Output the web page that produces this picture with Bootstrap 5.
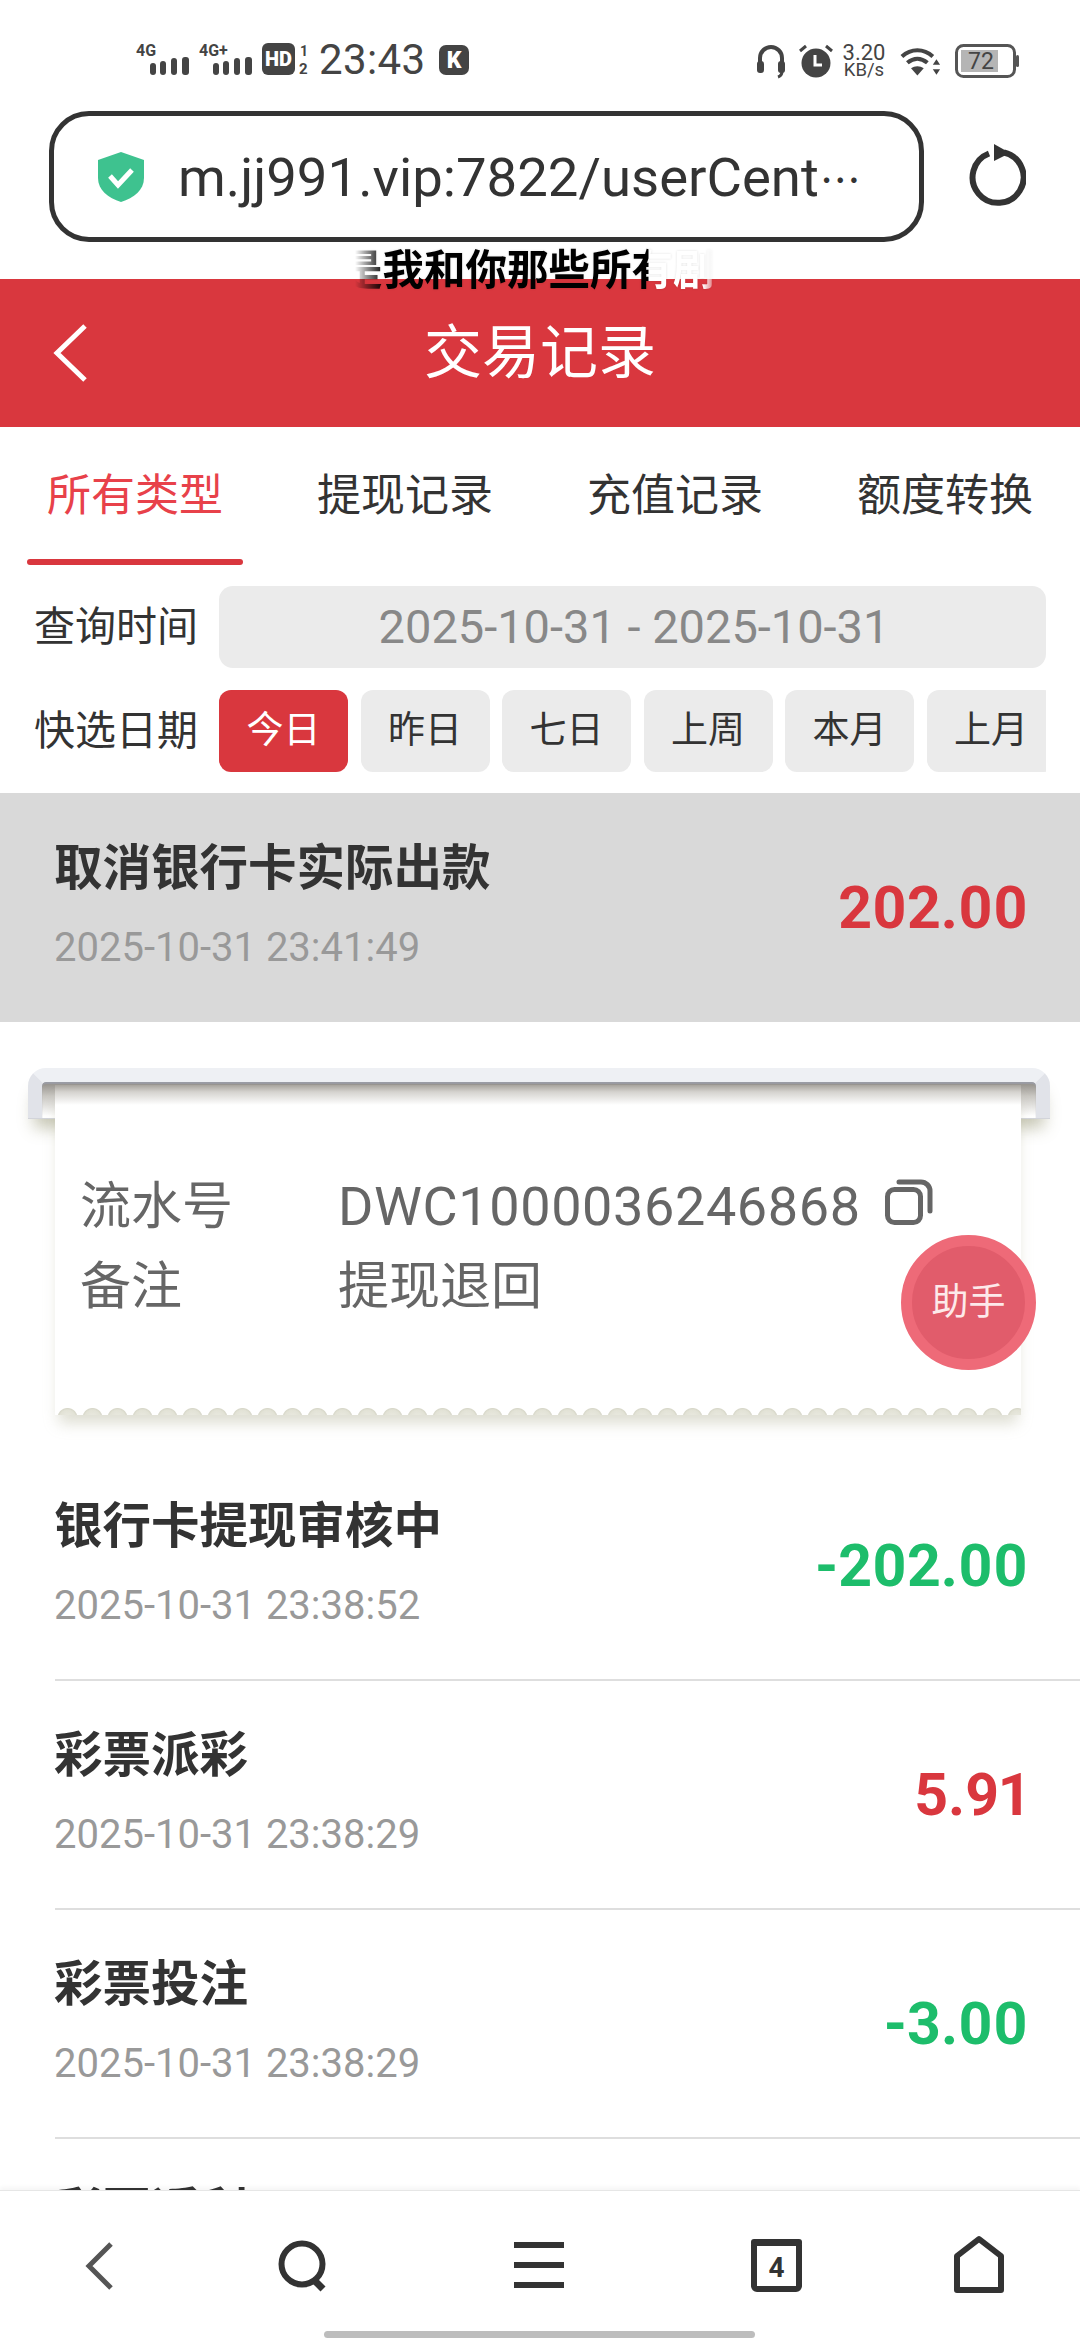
<!DOCTYPE html>
<html lang="zh">
<head>
<meta charset="utf-8">
<title>交易记录</title>
<link rel="stylesheet" href="https://cdn.jsdelivr.net/npm/bootstrap@5.3.0/dist/css/bootstrap.min.css">
<style>
html,body{margin:0;background:#fff}
body{font-family:Roboto,"Noto Sans CJK SC",sans-serif;color:#333}
.phone{width:1080px;height:2340px;position:relative;overflow:hidden;background:#fff}
.fx0{flex:none}
.status{height:111px;padding:43px 61px 0 136px;color:#444}
.status svg{display:block;flex:none;overflow:visible}
.sg2{margin-left:10px}
.hd{margin-left:10px}
.clock{font-size:42px;line-height:34px;width:108px;margin:0 12px 0 11px;letter-spacing:.4px;color:#444}
.ear{margin-right:14px}
.speed{width:48px;margin:0 13px 0 7px;text-align:center;line-height:1;color:#444}
.speed b{display:block;font-weight:400;font-size:22px;line-height:19px}
.speed i{display:block;font-style:normal;font-size:18.5px;line-height:17px}
.batt{margin-left:14px}
.addr-row{height:131px;padding-left:49px}
.addr{width:875px;height:131px;border:5px solid #333;border-radius:40px;padding-left:44px;background:#fff}
.addr-text{font-size:54.5px;line-height:60px;color:#333;margin:5px 0 0 34px;white-space:nowrap}
.addr-more{font-size:41px;margin-left:1px}
.reload{margin-left:44px;margin-top:-4px}
.ticker{position:absolute;left:341px;top:247px;width:378px;height:48px;z-index:3;font-size:41.5px;font-weight:700;line-height:48px;white-space:nowrap;
 background:linear-gradient(90deg,transparent 14px,#000 44px,#000 307px,#fff 308px,#fff 362px,transparent 378px);
 -webkit-background-clip:text;background-clip:text;color:transparent;filter:drop-shadow(0 0 1px rgba(0,0,0,.12))}
.head{height:148px;margin-top:37px;background:#d9373e;color:#fff;position:relative}
.head-title{font-size:58px;line-height:70px}
.head-back{position:absolute;left:52px;top:44px}
.tabs-wrap{height:138px}
.tab-item{flex:1 1 0;text-align:center;position:relative;padding-top:41px;font-size:44px;line-height:56px;color:#333;text-decoration:none}
.tab-item.on{color:#e8414a}
.tab-item.on::after{content:"";position:absolute;left:27px;right:27px;top:132px;height:6px;border-radius:3px;background:#d9373e}
.flt-label{width:219px;padding-left:34px;font-size:41px;line-height:50px;color:#333;flex:none;white-space:nowrap}
.flt-range{width:827px;height:82px;background:#ebebeb;border-radius:14px;padding-left:3px;font-size:47px;color:#888;text-align:center;line-height:82px;flex:none}
.flt-quick{width:827px;overflow:hidden;gap:12.5px;flex:none}
.flt-btn{flex:none;width:129px;height:82px;padding:0;border:0;background:#ebebeb;border-radius:12px;font-size:37px;color:#333;line-height:82px}
.flt-btn.on,.flt-btn.on:hover{background:#d9373e;color:#fff}
.flt-btn:hover{background:#ebebeb;color:#333}
.mt-a{margin-top:21px}
.mt-b{margin-top:22px;margin-bottom:21px}
.rec{display:flex;justify-content:space-between;align-items:center;height:229px;padding:0 52px 0 0;margin-left:55px;border-bottom:2px solid #dedede}
.rec-sel{margin-left:0;padding-left:55px;background:#d9d9d9;border-bottom:0}
.rec-peek{align-items:flex-start;padding-top:46px;border-bottom:0}
.rec-name{font-size:48.5px;font-weight:700;line-height:60px;color:#333;margin-top:-3px;margin-left:-1px}
.rec-time{font-size:40px;line-height:50px;color:#999;margin-top:24px;margin-left:-1px}
.rec-amt{font-size:59px;font-weight:700;line-height:70px;font-variant-numeric:proportional-nums}
.amt-in{color:#d9373e}.amt-out{color:#1dbd6b}
.list-wrap{flex:1 1 0;min-height:0;overflow:hidden;position:relative}
.tkt{height:430px;position:relative;padding:63px 59px 0 55px}
.tkt-roller{position:absolute;left:28px;top:46px;width:1022px;height:50px;border:14px solid;border-color:#eef0f4 #e1e3e9 transparent;border-bottom:0;border-radius:18px 18px 0 0;background:linear-gradient(180deg,#8f8b85 0,#c9c7c2 14px,#fff 34px) padding-box;
 box-shadow:0 1px 0 #d2d4da,0 16px 16px -6px rgba(130,130,90,.45),inset 0 2px 1px #9a9ca4}
.tkt-paper{position:relative;height:330px;background:linear-gradient(180deg,#a8a49d 0,#d5d3cf 7px,#fff 20px);padding:82px 0 0 25px;box-shadow:0 12px 14px -4px rgba(170,170,140,.4);z-index:1}
.tkt-paper::after{content:"";position:absolute;left:0;right:0;bottom:0;height:9px;background:radial-gradient(circle at 12.5px 12px,#ebebe2 0,#e2e2d6 8px,#d8d8ca 9.5px,transparent 10.5px) 0 0/25px 9px repeat-x}
.tkt-line{height:80px;font-size:51px;line-height:80px;color:#666;white-space:nowrap}
.tkt-key{width:258px;flex:none}
.tkt-val{font-size:54px;letter-spacing:.6px}
.tkt-copy{margin:-12px 0 0 24px}
.helper{position:absolute;left:901px;top:1235px;width:135px;height:135px;border-radius:50%;background:#e15c6b;border:11px solid #ee6a78;color:#fde9ea;font-size:37px;line-height:113px;text-align:center;z-index:4;white-space:nowrap}
.dock{height:150px;position:relative;border-top:1px solid #e6e6e6;background:#fff;box-shadow:0 -3px 4px rgba(0,0,0,.04)}
.dock svg{position:absolute}
.ic-back{left:84px;top:50px}.ic-find{left:278px;top:49px}.ic-menu{left:514px;top:51px}.ic-tabs{left:751px;top:48px}.ic-home{left:954px;top:44px}
.dock-bar{position:absolute;left:324px;top:140px;width:431px;height:7px;border-radius:4px;background:#bdbdbd}
</style>
</head>
<body>
<div class="phone d-flex flex-column">
  <div class="status d-flex align-items-start justify-content-between fx0">
    <div class="d-flex align-items-center">
      <svg width="53" height="34" viewBox="0 0 53 34"><text x="0" y="13" font-family="Roboto" font-weight="700" font-size="16" fill="#444">4G</text><g fill="#444"><rect x="14" y="20" width="6" height="12" rx="3"/><rect x="24" y="18" width="6" height="14" rx="3"/><rect x="35" y="15" width="6" height="17" rx="3"/><rect x="46" y="14" width="7" height="18" rx="3"/></g></svg>
      <svg class="sg2" width="53" height="34" viewBox="0 0 53 34"><text x="0" y="13" font-family="Roboto" font-weight="700" font-size="16" fill="#444">4G+</text><g fill="#444"><rect x="14" y="20" width="6" height="12" rx="3"/><rect x="24" y="18" width="6" height="14" rx="3"/><rect x="35" y="15" width="6" height="17" rx="3"/><rect x="46" y="14" width="7" height="18" rx="3"/></g></svg>
      <svg class="hd" width="46" height="34" viewBox="0 0 46 34"><rect x="0" y="0" width="33" height="32" rx="6" fill="#444"/><text x="16.5" y="23" text-anchor="middle" font-family="Roboto" font-weight="900" font-size="20" fill="#fff">HD</text><text x="38" y="13" font-family="Roboto" font-weight="700" font-size="14" fill="#444">1</text><text x="37" y="31" font-family="Roboto" font-weight="700" font-size="15" fill="#444">2</text></svg>
      <span class="clock">23:43</span>
      <svg width="30" height="32" viewBox="0 0 30 32"><rect x="0" y="1" width="30" height="30" rx="7" fill="#444"/><text x="15" y="24" text-anchor="middle" font-family="Roboto" font-weight="900" font-size="23" fill="#fff">K</text></svg>
    </div>
    <div class="d-flex align-items-center">
      <svg class="ear" width="28" height="34" viewBox="0 0 28 34"><path d="M3 21V14a11 11 0 0 1 22 0v7" fill="none" stroke="#444" stroke-width="4"/><rect x="0" y="17" width="7" height="12" rx="3" fill="#444"/><rect x="21" y="17" width="7" height="12" rx="3" fill="#444"/><path d="M25 27c0 3-1 5-4 6" fill="none" stroke="#444" stroke-width="3"/></svg>
      <svg width="34" height="34" viewBox="0 0 34 34"><circle cx="17" cy="19" r="14.5" fill="#444"/><path d="M16 11v10h7" fill="none" stroke="#fff" stroke-width="3"/><path d="M1 7l6-5M33 7l-6-5" stroke="#444" stroke-width="3"/></svg>
      <div class="speed"><b>3.20</b><i>KB/s</i></div>
      <svg width="40" height="32" viewBox="0 0 44 32"><g fill="none" stroke="#444" stroke-width="4.5"><path d="M1 11c10-9 24-9 34 0"/><path d="M7 18c7-6 15-6 22 0"/></g><path d="M11 24c4-3 10-3 14 0l-7 8z" fill="#444"/><path d="M39 14l4 6h-8zM39 31l-4-6h8z" fill="#444"/></svg>
      <svg class="batt" width="64" height="34" viewBox="0 0 64 34"><rect x="1.5" y="1.5" width="58" height="31" rx="7" fill="#fff" stroke="#555" stroke-width="3"/><rect x="6" y="6" width="37" height="22" fill="#b5b5b5"/><rect x="61" y="11" width="3" height="12" rx="1.5" fill="#555"/><text x="26" y="25" text-anchor="middle" font-family="Roboto" font-size="23" fill="#444">72</text></svg>
    </div>
  </div>

  <div class="addr-row d-flex align-items-center fx0">
    <div class="addr d-flex align-items-center">
      <svg width="46" height="50" viewBox="0 0 46 50"><path d="M23 0l23 8v18c0 12-10 20-23 24C10 46 0 38 0 26V8z" fill="#3ec28f"/><path d="M12 24l8 9 14-15" fill="none" stroke="#fff" stroke-width="5"/></svg>
      <span class="addr-text">m.jj991.vip:7822/userCent<span class="addr-more">⋯</span></span>
    </div>
    <svg class="reload" width="58" height="62" viewBox="0 0 58 62"><path d="M21 9.500A25.500 25.500 0 1 0 36 8.500" fill="none" stroke="#333" stroke-width="6"/><path d="M26 0l16 9-16 8z" fill="#333"/></svg>
  </div>

  <div class="ticker">是我和你那些所有剧</div>

  <header class="head d-flex align-items-center justify-content-center fx0">
    <svg class="head-back" width="36" height="60" viewBox="0 0 36 60"><path d="M33 3L5 30l28 27" fill="none" stroke="#fff" stroke-width="5"/></svg>
    <div class="head-title">交易记录</div>
  </header>

  <nav class="nav tabs-wrap flex-nowrap fx0">
    <a class="tab-item on" href="#">所有类型</a>
    <a class="tab-item" href="#">提现记录</a>
    <a class="tab-item" href="#">充值记录</a>
    <a class="tab-item" href="#">额度转换</a>
  </nav>

  <div class="d-flex align-items-center fx0 mt-a">
    <div class="flt-label">查询时间</div>
    <div class="flt-range">2025-10-31 - 2025-10-31</div>
  </div>
  <div class="d-flex align-items-center fx0 mt-b">
    <div class="flt-label">快选日期</div>
    <div class="flt-quick d-flex">
      <button class="btn flt-btn on">今日</button>
      <button class="btn flt-btn">昨日</button>
      <button class="btn flt-btn">七日</button>
      <button class="btn flt-btn">上周</button>
      <button class="btn flt-btn">本月</button>
      <button class="btn flt-btn">上月</button>
    </div>
  </div>

  <div class="list-wrap">
    <div class="rec rec-sel">
      <div><div class="rec-name">取消银行卡实际出款</div><div class="rec-time">2025-10-31 23:41:49</div></div>
      <div class="rec-amt amt-in">202.00</div>
    </div>
    <div class="tkt">
      <div class="tkt-roller"></div>
      <div class="tkt-paper">
        <div class="tkt-line d-flex align-items-center"><span class="tkt-key">流水号</span><span class="tkt-val">DWC1000036246868</span>
          <svg class="tkt-copy" width="48" height="48" viewBox="0 0 48 48"><rect x="2.500" y="12.500" width="33" height="33" rx="7" fill="none" stroke="#666" stroke-width="5"/><path d="M14 5h22a9 9 0 0 1 9 9v20" fill="none" stroke="#666" stroke-width="5" stroke-linecap="round"/></svg>
        </div>
        <div class="tkt-line d-flex align-items-center"><span class="tkt-key">备注</span><span>提现退回</span></div>
      </div>
    </div>
    <div class="rec">
      <div><div class="rec-name">银行卡提现审核中</div><div class="rec-time">2025-10-31 23:38:52</div></div>
      <div class="rec-amt amt-out">-202.00</div>
    </div>
    <div class="rec">
      <div><div class="rec-name">彩票派彩</div><div class="rec-time">2025-10-31 23:38:29</div></div>
      <div class="rec-amt amt-in">5.91</div>
    </div>
    <div class="rec">
      <div><div class="rec-name">彩票投注</div><div class="rec-time">2025-10-31 23:38:29</div></div>
      <div class="rec-amt amt-out">-3.00</div>
    </div>
    <div class="rec rec-peek">
      <div class="rec-name">彩票返利</div>
    </div>
  </div>

  <div class="helper">助手</div>

  <footer class="dock fx0">
    <svg class="ic-back" width="30" height="50" viewBox="0 0 30 50"><path d="M27 3L5 25l22 22" fill="none" stroke="#555" stroke-width="5"/></svg>
    <svg class="ic-find" width="50" height="52" viewBox="0 0 50 52"><circle cx="24" cy="24" r="20.500" fill="none" stroke="#333" stroke-width="6"/><path d="M36 40l9 9" stroke="#333" stroke-width="7"/></svg>
    <svg class="ic-menu" width="50" height="47" viewBox="0 0 50 47"><g fill="#333"><rect width="50" height="6" y="0"/><rect width="50" height="6" y="20"/><rect width="50" height="6" y="40"/></g></svg>
    <svg class="ic-tabs" width="51" height="53" viewBox="0 0 51 53"><rect x="3" y="3" width="45" height="47" rx="3" fill="none" stroke="#333" stroke-width="6"/><rect x="0" y="0" width="51" height="7" rx="3" fill="#333"/><text x="25.500" y="38" text-anchor="middle" font-family="Roboto" font-weight="700" font-size="28" fill="#333">4</text></svg>
    <svg class="ic-home" width="50" height="58" viewBox="0 0 50 58"><path d="M3 21L25 4l22 17v34H3z" fill="none" stroke="#333" stroke-width="6" stroke-linejoin="round"/></svg>
    <div class="dock-bar"></div>
  </footer>
</div>
<script src="https://cdn.jsdelivr.net/npm/bootstrap@5.3.0/dist/js/bootstrap.bundle.min.js"></script>
</body>
</html>
